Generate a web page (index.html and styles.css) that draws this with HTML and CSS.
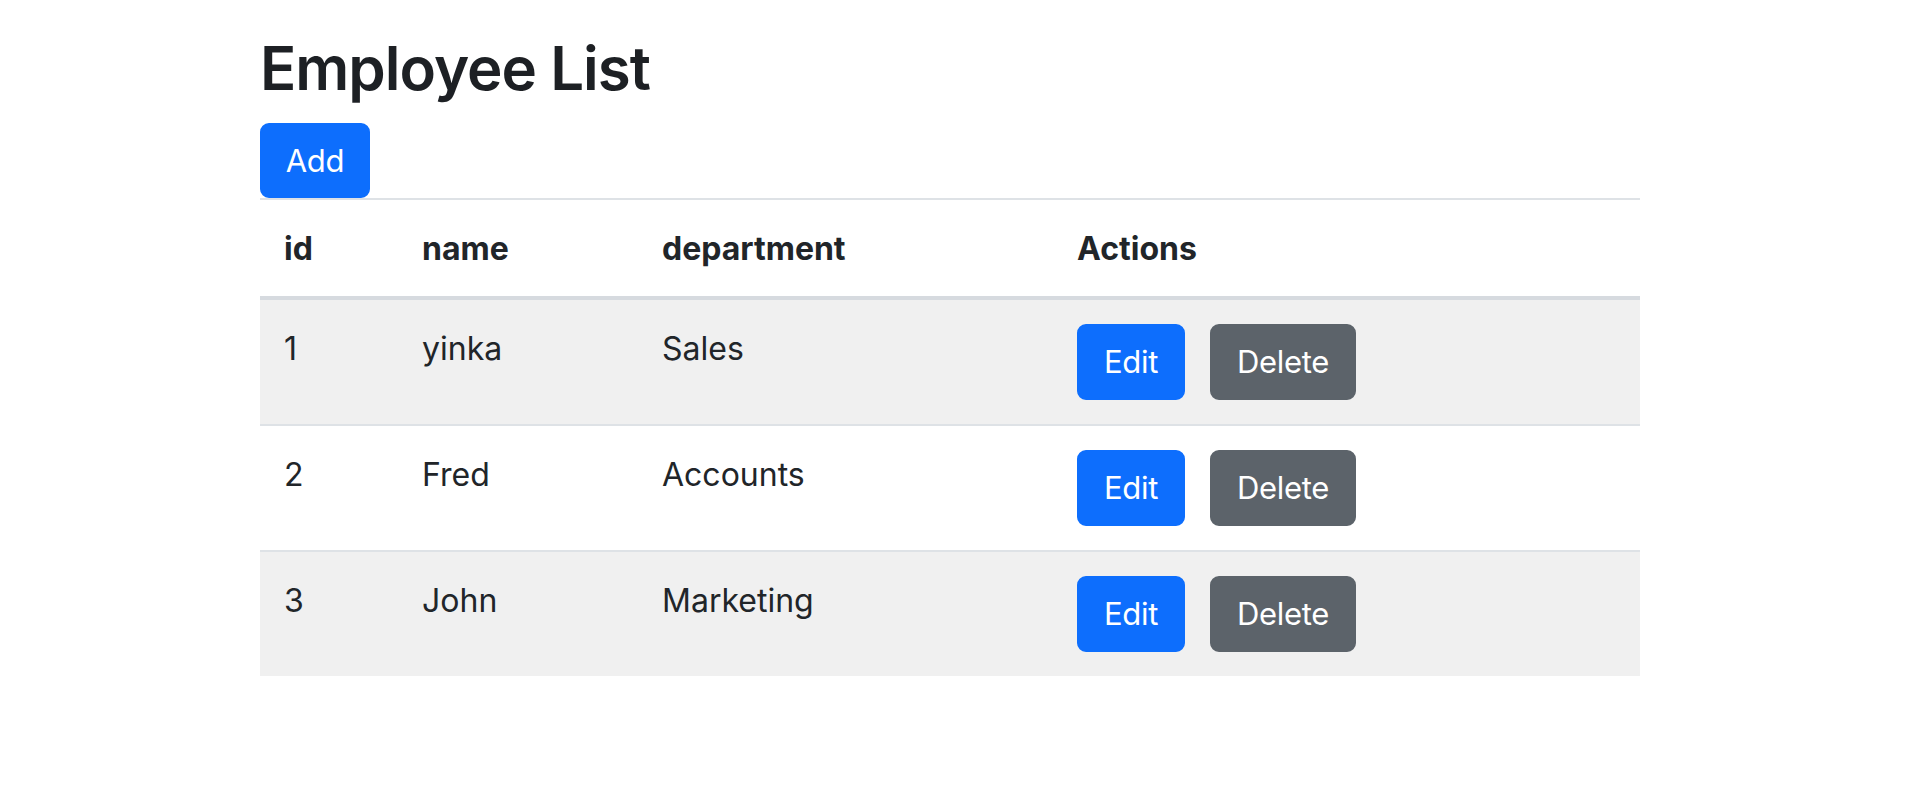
FILE: index.html
```html
<!DOCTYPE html>
<html lang="en">
<head>
<meta charset="utf-8">
<title>Employee List</title>
<link rel="stylesheet" href="styles.css">
</head>
<body>
<div class="container">
  <h1 class="title">Employee List</h1>
  <div class="toolbar">
    <button class="btn btn-primary btn-add">Add</button>
  </div>
  <table class="table">
    <thead>
      <tr><th class="col-id">id</th><th class="col-name">name</th><th class="col-dept">department</th><th class="col-actions">Actions</th></tr>
    </thead>
    <tbody>
      <tr>
        <td>1</td><td>yinka</td><td>Sales</td>
        <td class="cell-actions"><div class="actions"><button class="btn btn-primary btn-edit">Edit</button><button class="btn btn-secondary btn-delete">Delete</button></div></td>
      </tr>
      <tr>
        <td>2</td><td>Fred</td><td>Accounts</td>
        <td class="cell-actions"><div class="actions"><button class="btn btn-primary btn-edit">Edit</button><button class="btn btn-secondary btn-delete">Delete</button></div></td>
      </tr>
      <tr>
        <td>3</td><td>John</td><td>Marketing</td>
        <td class="cell-actions"><div class="actions"><button class="btn btn-primary btn-edit">Edit</button><button class="btn btn-secondary btn-delete">Delete</button></div></td>
      </tr>
    </tbody>
  </table>
</div>
</body>
</html>
```
FILE: styles.css
```css
* { box-sizing: border-box; }
html, body { margin: 0; padding: 0; background: #fff; }
body {
  font-family: Inter, "Noto Sans", "Liberation Sans", sans-serif;
  font-size: 32px;
  line-height: 48px;
  color: #212529;
}
.container {
  width: 1380px;
  margin-left: 260px;
  padding-top: 30px;
}
.title {
  margin: 0 0 16px 0;
  font-size: 60px;
  line-height: 77px;
  font-weight: 600;
  letter-spacing: -1px;
  color: #1d2024;
}
.toolbar { display: flex; }
.btn {
  display: inline-flex;
  align-items: center;
  justify-content: center;
  height: 76px;
  padding: 0 24px;
  border: 2px solid transparent;
  border-radius: 9px;
  font-family: inherit;
  font-size: 31px;
  line-height: 48px;
  color: #fff;
  letter-spacing: -0.3px;
  cursor: pointer;
}
.btn-primary { background: #0d6efd; border-color: #0d6efd; }
.btn-secondary { background: #5c636a; border-color: #5c636a; }
.btn-add { width: 110px; height: 75px; }
.btn-edit { width: 108px; }
.btn-delete { width: 146px; }
.table {
  width: 100%;
  border-collapse: collapse;
}
.table th, .table td {
  padding: 25px 24px 23px 24px;
  text-align: left;
  vertical-align: top;
  line-height: 48px;
}
.table td.cell-actions { padding: 24px; }
.table th {
  font-weight: 700;
  border-top: 2px solid #dee2e6;
  border-bottom: 4px solid #d6dadf;
}
.table td { border-bottom: 2px solid #dee2e6; }
.table tbody tr:last-child td { border-bottom: none; }
.table tbody tr:nth-child(odd) td { background: #f0f0f0; }
.col-id { width: 138px; }
.col-name { width: 240px; }
.col-dept { width: 415px; }
.actions { display: flex; gap: 25px; }
```
